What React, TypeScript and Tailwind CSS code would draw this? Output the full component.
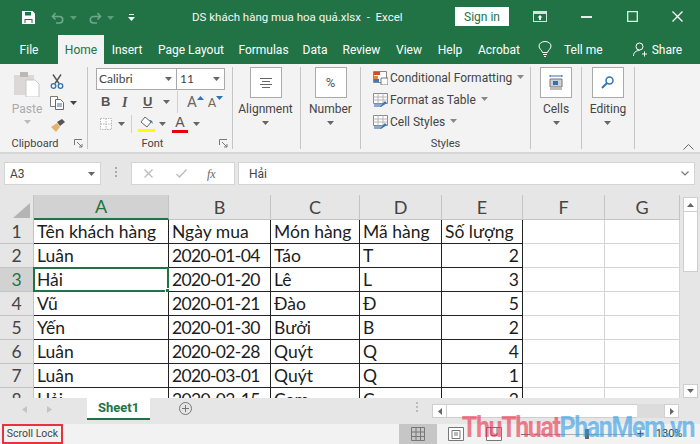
import type { ReactNode } from "react";

const ui = "font-['Roboto','Open_Sans',sans-serif]";
const sheetFont = "font-['Lato','Noto_Sans',sans-serif]";

const tabs = [
  { label: "File", cls: "w-[58px]" },
  { label: "Home", cls: "w-[46px] bg-[#f3f3f3] text-[#217346]" },
  { label: "Insert", cls: "w-[46px]" },
  { label: "Page Layout", cls: "w-[82px]" },
  { label: "Formulas", cls: "w-[63px]" },
  { label: "Data", cls: "w-[40px]" },
  { label: "Review", cls: "w-[53px]" },
  { label: "View", cls: "w-[42px]" },
  { label: "Help", cls: "w-[40px]" },
  { label: "Acrobat", cls: "w-[58px]" },
];

const columns = [
  { name: "A", cls: "w-[135px]" },
  { name: "B", cls: "w-[102px]" },
  { name: "C", cls: "w-[89px]" },
  { name: "D", cls: "w-[82px]" },
  { name: "E", cls: "w-[81px]" },
  { name: "F", cls: "w-[82px]" },
  { name: "G", cls: "w-[75px]" },
];

const rows: string[][] = [
  ["Tên khách hàng", "Ngày mua", "Món hàng", "Mã hàng", "Số lượng"],
  ["Luân", "2020-01-04", "Táo", "T", "2"],
  ["Hải", "2020-01-20", "Lê", "L", "3"],
  ["Vũ", "2020-01-21", "Đào", "Đ", "5"],
  ["Yến", "2020-01-30", "Bưởi", "B", "2"],
  ["Luân", "2020-02-28", "Quýt", "Q", "4"],
  ["Luân", "2020-03-01", "Quýt", "Q", "1"],
  ["Hải", "2020-03-15", "Cam", "C", "3"],
];

function Drop({ color = "#666" }: { color?: string }) {
  return (
    <svg width="7" height="4" viewBox="0 0 7 4" className="shrink-0">
      <path d="M0 0h7L3.5 4z" fill={color} />
    </svg>
  );
}

function Launcher() {
  return (
    <svg width="9" height="9" viewBox="0 0 9 9" fill="none" stroke="#777">
      <path d="M.5 6V.5H8M3 3l5 5M8 5v3H5" />
    </svg>
  );
}

function Group({
  label,
  cls,
  labelCls = "",
  children,
  launcher,
}: {
  label: string;
  cls: string;
  labelCls?: string;
  children: ReactNode;
  launcher?: ReactNode;
}) {
  return (
    <div className={`flex h-[82px] shrink-0 flex-col border-r border-[#c6c6c6] ${cls}`}>
      <div className="min-h-0 flex-1">{children}</div>
      <div className={`relative h-[10px] text-center text-[11px] leading-[10px] text-[#444] ${labelCls}`}>
        {label}
        {launcher}
      </div>
    </div>
  );
}

function BigButton({ label, icon }: { label: string; icon: ReactNode }) {
  return (
    <div className="flex flex-col items-center">
      <div className="flex h-[31px] w-[32px] items-center justify-center border border-[#ababab] bg-white">{icon}</div>
      <div className="mt-[3px] text-[12px] leading-[16px] text-[#444]">{label}</div>
      <div className="mt-[4px]">
        <Drop />
      </div>
    </div>
  );
}

function StyleRow({ label, icon }: { label: string; icon: ReactNode }) {
  return (
    <div className="flex h-[22px] items-center">
      <div className="flex w-[18px] justify-center">{icon}</div>
      <span className="ml-[1px] text-[12px] text-[#444]">{label}</span>
      <span className="mb-[2px] ml-[5px]">
        <Drop color="#888" />
      </span>
    </div>
  );
}

function TableIcon() {
  return (
    <svg width="15" height="15" viewBox="0 0 15 15">
      <path d="M.5.5h14v10h-14z" fill="#fff" stroke="#8a8a8a" />
      <path d="M.5 4h14M.5 7h14M5 .5v10M10 .5v10" stroke="#b5b5b5" />
      <path d="M6 14l6-6 2 2-6 4z" fill="#3f77b5" />
      <path d="M1 14h6l2-3H1z" fill="#8aa9cc" />
    </svg>
  );
}

function TitleBar() {
  return (
    <div className="flex h-[35px] shrink-0 items-center text-white">
      <div className="ml-[22px] flex items-center">
        <svg width="13" height="13" viewBox="0 0 13 13">
          <path d="M0 0h10.5L13 2.5V13H0z" fill="#fff" />
          <path d="M3 1h6v3.5H3zM2.5 8h8v4h-8z" fill="#217346" />
          <path d="M3.5 9h6v3h-6z" fill="#fff" />
        </svg>
        <svg width="14" height="12" viewBox="0 0 14 12" fill="none" stroke="#70a98a" strokeWidth="1.6" className="ml-[16px]">
          <path d="M4.5 1L1.5 4.5l3 3M1.5 4.5h7a3.2 3.2 0 0 1 0 6.5H5" />
        </svg>
        <span className="ml-[5px]">
          <Drop color="#5d9c7c" />
        </span>
        <svg width="14" height="12" viewBox="0 0 14 12" fill="none" stroke="#70a98a" strokeWidth="1.6" className="ml-[11px]">
          <path d="M9.5 1l3 3.5-3 3M12.5 4.5h-7a3.2 3.2 0 0 0 0 6.5H9" />
        </svg>
        <span className="ml-[5px]">
          <Drop color="#5d9c7c" />
        </span>
        <svg width="7" height="8" viewBox="0 0 7 8" className="ml-[14px]">
          <path d="M1 0h5v1H1zM0 3h7L3.5 7z" fill="#fff" />
        </svg>
      </div>
      <div className="ml-[57px] text-[11.5px] text-[#f4f8f5]">DS khách hàng mua hoa quả.xlsx&nbsp; -&nbsp; Excel</div>
      <div className="ml-auto flex items-center pb-[2px]">
        <div className="flex h-[19px] w-[54px] items-center justify-center bg-white text-[12px] text-[#217346]">Sign in</div>
        <svg width="14" height="11" viewBox="0 0 14 11" className="ml-[24px]">
          <path d="M0 0h14v11H0z" fill="#d4e4da" />
          <path d="M1 3h12v7H1z" fill="#217346" />
          <path d="M7 4l2.5 2.5H8V9H6V6.5H4.5z" fill="#fff" />
        </svg>
        <svg width="11" height="2" viewBox="0 0 11 2" className="ml-[34px]">
          <path d="M0 0h11v2H0z" fill="#e4efe8" />
        </svg>
        <svg width="11" height="11" viewBox="0 0 11 11" fill="none" stroke="#e4efe8" strokeWidth="1.3" className="ml-[35px]">
          <path d="M.7.7h9.6v9.6H.7z" />
        </svg>
        <svg width="11" height="11" viewBox="0 0 11 11" fill="none" stroke="#fff" strokeWidth="1.3" className="ml-[34px] mr-[17px]">
          <path d="M.5.5l10 10M10.5.5l-10 10" />
        </svg>
      </div>
    </div>
  );
}

function TabStrip() {
  return (
    <div className="flex h-[29px] shrink-0 items-stretch text-[12px] text-white">
      {tabs.map((t) => (
        <div key={t.label} className={`flex items-center justify-center ${t.cls}`}>
          {t.label}
        </div>
      ))}
      <svg width="14" height="17" viewBox="0 0 14 17" fill="none" stroke="#fff" className="ml-[10px] mt-[6px]">
        <path d="M4.5 11.5C4 9 1 8 1 5a6 4.5 0 0 1 12 0c0 3-3 4-3.5 6.5zM5 13.5h4M6 15.5h2" />
      </svg>
      <div className="ml-[12px] flex items-center">Tell me</div>
      <svg width="15" height="15" viewBox="0 0 15 15" fill="none" stroke="#fff" className="ml-[30px] mt-[7px]">
        <circle cx="6.5" cy="4.5" r="3.5" />
        <path d="M.5 14c0-3.5 2.5-5.5 6-5.5M11.5 9.5v5M9 12h5" />
      </svg>
      <div className="ml-[4px] flex items-center">Share</div>
    </div>
  );
}

function Ribbon() {
  return (
    <div className="flex h-[90px] shrink-0 border-b-2 border-[#d6d6d6] bg-[#f3f3f3] pt-[3px]">
      <Group
        label="Clipboard"
        cls="w-[88px]"
        labelCls="pr-[17px]"
        launcher={
          <span className="absolute right-[4px] top-0">
            <Launcher />
          </span>
        }
      >
        <div className="flex">
          <div className="ml-[13px] flex w-[28px] flex-col items-center pt-[5px]">
            <svg width="26" height="25" viewBox="0 0 26 25">
              <path d="M0 3h20v20H0z" fill="#dcd8d8" />
              <path d="M6 0h8v5H6z" fill="#bdb8b8" />
              <path d="M12 8h9l4 4v13H12z" fill="#fff" stroke="#c8c8c8" />
            </svg>
            <div className="mt-[4px] text-[12px] leading-[16px] text-[#aaa]">Paste</div>
            <div className="mt-[3px]">
              <Drop color="#bbb" />
            </div>
          </div>
          <div className="ml-[9px] flex flex-col pt-[3px]">
            <div className="flex h-[22px] items-center">
              <svg width="14" height="15" viewBox="0 0 14 15" fill="none" stroke="#555">
                <path d="M3 .5l6 9M11 .5l-6 9" strokeWidth="1.4" />
                <circle cx="3.5" cy="12" r="2.3" stroke="#2f75b5" strokeWidth="1.3" />
                <circle cx="10.5" cy="12" r="2.3" stroke="#2f75b5" strokeWidth="1.3" />
              </svg>
            </div>
            <div className="flex h-[22px] items-center">
              <svg width="14" height="14" viewBox="0 0 14 14" fill="#fff" stroke="#777">
                <path d="M.5.5h7v10h-7z" />
                <path d="M5.5 3.5h5l3 3v7h-8z" stroke="#2f75b5" />
                <path d="M7 8h5M7 10h5" stroke="#2f75b5" />
              </svg>
              <span className="ml-[6px]">
                <Drop color="#444" />
              </span>
            </div>
            <div className="flex h-[22px] items-center">
              <svg width="15" height="13" viewBox="0 0 15 13">
                <path d="M1 8l6-4 3 4-4 5z" fill="#e3b36b" />
                <path d="M7 3l5-3 3 3-5 4z" fill="#555" />
              </svg>
            </div>
          </div>
        </div>
      </Group>
      <Group
        label="Font"
        cls="w-[145px]"
        labelCls="pr-[15px]"
        launcher={
          <span className="absolute right-[4px] top-0">
            <Launcher />
          </span>
        }
      >
        <div className="ml-[8px] mt-[1px] flex h-[22px] w-[129px] border border-[#a9a9a9] bg-white text-[12px] text-[#444]">
          <div className={`flex w-[80px] items-center justify-between border-r border-[#a9a9a9] pl-[2px] pr-[4px] ${sheetFont}`}>
            Calibri
            <Drop />
          </div>
          <div className={`flex flex-1 items-center justify-between pl-[3px] pr-[4px] ${sheetFont}`}>
            11
            <Drop />
          </div>
        </div>
        <div className="mt-[1px] flex h-[22px] items-center text-[#555]">
          <span className="ml-[13px] w-[21px] font-['Liberation_Sans'] text-[13px] font-bold">B</span>
          <span className="w-[21px] font-['Liberation_Serif'] text-[14px] font-bold italic">I</span>
          <span className="w-[20px] font-['Liberation_Sans'] text-[13px] font-bold underline">U</span>
          <Drop />
          <span className="ml-[7px] h-[22px] w-px bg-[#d0d0d0]" />
          <span className="ml-[9px] flex items-start text-[15px] leading-none text-[#666]">
            A
            <svg width="7" height="4" viewBox="0 0 7 4" className="mt-[1px]">
              <path d="M0 4h7L3.5 0z" fill="#2f75b5" />
            </svg>
          </span>
          <span className="ml-[4px] flex items-start text-[13px] leading-none text-[#666]">
            A
            <svg width="7" height="4" viewBox="0 0 7 4">
              <path d="M0 0h7L3.5 4z" fill="#2f75b5" />
            </svg>
          </span>
        </div>
        <div className="flex h-[22px] items-center">
          <svg width="12" height="12" viewBox="0 0 12 12" fill="#fff" stroke="#b8b8b8" className="ml-[12px]">
            <path d="M.5.5h11v11H.5zM6 .5v11M.5 6h11" strokeDasharray="1.5 1" />
          </svg>
          <span className="ml-[6px]">
            <Drop />
          </span>
          <span className="ml-[6px] h-[18px] w-px bg-[#d0d0d0]" />
          <div className="ml-[6px] flex w-[17px] flex-col items-center">
            <svg width="13" height="11" viewBox="0 0 13 11">
              <path d="M5 0l6 5-4 5-6-5z" fill="#fff" stroke="#666" />
              <path d="M9 3c3 0 4 2 3.5 4L11 5z" fill="#2f75b5" />
            </svg>
            <div className="mt-[1px] h-[3px] w-[17px] bg-[#ffff00]" />
          </div>
          <span className="ml-[4px]">
            <Drop />
          </span>
          <div className="ml-[6px] flex w-[16px] flex-col items-center">
            <span className="h-[12px] font-['Liberation_Sans'] text-[14px] leading-[12px] text-[#555]">A</span>
            <div className="mt-[2px] h-[3px] w-[16px] bg-[#e8000d]" />
          </div>
          <span className="ml-[5px]">
            <Drop />
          </span>
        </div>
      </Group>
      <Group label="" cls="w-[68px]">
        <div className="flex justify-center pr-[2px]">
          <BigButton
            label="Alignment"
            icon={
              <svg width="14" height="10" viewBox="0 0 14 10" stroke="#666">
                <path d="M1 .5h12M3 3.5h8M1 6.5h12M3 9.5h8" />
              </svg>
            }
          />
        </div>
      </Group>
      <Group label="" cls="w-[60px]">
        <div className="flex justify-center">
          <BigButton label="Number" icon={<span className="text-[13px] text-[#555]">%</span>} />
        </div>
      </Group>
      <Group label="Styles" cls="w-[170px]">
        <div className="ml-[10px]">
          <StyleRow
            label="Conditional Formatting"
            icon={
              <svg width="15" height="14" viewBox="0 0 15 14">
                <path d="M.5.5h13v11H.5z" fill="#fff" stroke="#888" />
                <path d="M1 1h6v3H1z" fill="#d9472b" />
                <path d="M1 5h4v3H1z" fill="#e8863a" />
                <path d="M1 8h5v3H1z" fill="#3f77b5" />
                <path d="M8 7h7v7H8z" fill="#fff" stroke="#777" />
              </svg>
            }
          />
          <StyleRow label="Format as Table" icon={<TableIcon />} />
          <StyleRow label="Cell Styles" icon={<TableIcon />} />
        </div>
      </Group>
      <Group label="" cls="w-[51px]">
        <div className="flex justify-center">
          <BigButton
            label="Cells"
            icon={
              <svg width="14" height="15" viewBox="0 0 14 15">
                <path d="M1 1h12M1 0v2M13 0v2" stroke="#2f75b5" fill="none" />
                <path d="M1 4h12v8H1z" fill="#cfcfcf" stroke="#777" />
                <path d="M4 6h5v4H4z" fill="#2f75b5" />
                <path d="M1 13h12v2H1z" fill="#bbb" />
              </svg>
            }
          />
        </div>
      </Group>
      <Group label="" cls="w-[53px]">
        <div className="flex justify-center">
          <BigButton
            label="Editing"
            icon={
              <svg width="13" height="13" viewBox="0 0 13 13" fill="none" stroke="#2f75b5" strokeWidth="1.5">
                <circle cx="8.5" cy="4.5" r="3.5" />
                <path d="M6 7l-5 5" strokeWidth="2" />
              </svg>
            }
          />
        </div>
      </Group>
      <div className="flex flex-1 items-end justify-end pb-[2px] pr-[6px]">
        <svg width="11" height="6" viewBox="0 0 11 6" fill="none" stroke="#666">
          <path d="M.5 5.5l5-5 5 5" />
        </svg>
      </div>
    </div>
  );
}

function FormulaBar() {
  return (
    <div className="flex h-[41px] shrink-0 items-start bg-[#e6e6e6] pl-[4px] pr-[5px] pt-[8px] text-[12px] text-[#444]">
      <div className="flex h-[23px] w-[97px] items-center justify-between border border-[#d4d4d4] bg-white pl-[5px] pr-[5px]">
        A3
        <Drop />
      </div>
      <div className="flex w-[30px] flex-col items-center gap-[2px] pt-[5px]">
        <i className="h-[2px] w-[2px] bg-[#aaa]" />
        <i className="h-[2px] w-[2px] bg-[#aaa]" />
        <i className="h-[2px] w-[2px] bg-[#aaa]" />
      </div>
      <div className="flex h-[23px] w-[104px] items-center border border-[#d4d4d4] bg-white">
        <svg width="9" height="9" viewBox="0 0 9 9" stroke="#bbb" strokeWidth="1.3" className="ml-[12px]">
          <path d="M.5.5l8 8M8.5.5l-8 8" />
        </svg>
        <svg width="11" height="9" viewBox="0 0 11 9" fill="none" stroke="#bbb" strokeWidth="1.3" className="ml-[23px]">
          <path d="M.5 5l3 3 7-7.5" />
        </svg>
        <span className="ml-[20px] font-['Liberation_Serif'] text-[12px] italic text-[#666]">fx</span>
      </div>
      <div className="ml-[3px] flex h-[23px] flex-1 items-center justify-between border border-[#d4d4d4] bg-white pl-[10px] pr-[5px]">
        Hải
        <svg width="8" height="5" viewBox="0 0 8 5" fill="none" stroke="#777" strokeWidth="1.2">
          <path d="M.5.5L4 4 7.5.5" />
        </svg>
      </div>
    </div>
  );
}

function Sheet() {
  return (
    <div className={`flex min-h-0 flex-1 bg-[#e6e6e6] ${sheetFont}`}>
      <div className="w-[680px] shrink-0 overflow-hidden">
        <div className="flex h-[25px] text-[18px] text-[#444]">
          <div className="flex w-[34px] shrink-0 items-end justify-end border-r border-[#c4c4c4] pb-[2px] pr-[3px]">
            <svg width="17" height="15" viewBox="0 0 17 15">
              <path d="M17 0v15H0z" fill="#b4b4b4" />
            </svg>
          </div>
          {columns.map((c) => (
            <div
              key={c.name}
              className={`flex shrink-0 items-center justify-center border-r border-[#c4c4c4] ${c.cls} ${
                c.name === "A" ? "border-b-2 border-b-[#217346] bg-[#d2d2d2] text-[#217346]" : "border-b border-b-[#c4c4c4]"
              }`}
            >
              {c.name}
            </div>
          ))}
        </div>
        {rows.map((row, r) => (
          <div key={r} className="flex h-[24px] text-[17.5px] leading-[24px] text-[#1c1c1c]">
            <div
              className={`flex w-[34px] shrink-0 items-center justify-center border-b border-r border-[#c4c4c4] text-[#444] ${
                r === 2 ? "bg-[#d2d2d2] text-[#217346]" : ""
              }`}
            >
              {r + 1}
            </div>
            {columns.map((c, i) => {
              const filled = i < 5;
              const value = row[i] ?? "";
              const selected = r === 2 && i === 0;
              return (
                <div
                  key={c.name}
                  className={`relative box-border shrink-0 whitespace-nowrap px-[3px] ${c.cls} ${
                    filled ? "border-b border-r border-[#222] bg-white" : "border-b border-r border-[#d4d4d4] bg-white"
                  } ${i === 4 && r > 0 ? "text-right" : ""} ${i === 1 && r > 0 ? "tracking-[-0.65px]" : ""}`}
                >
                  {value}
                  {selected && (
                    <div className="absolute left-[-1px] top-[-1px] h-[25px] w-[136px] border-2 border-[#217346]">
                      <span className="absolute bottom-[-4px] right-[-4px] h-[6px] w-[6px] border border-white bg-[#217346]" />
                    </div>
                  )}
                </div>
              );
            })}
          </div>
        ))}
      </div>
      <div className="ml-[3px] flex w-[15px] flex-col pt-[2px]">
        <div className="flex h-[15px] items-center justify-center border border-[#cfcfcf] bg-white">
          <svg width="7" height="4" viewBox="0 0 7 4">
            <path d="M0 4h7L3.5 0z" fill="#666" />
          </svg>
        </div>
        <div className="h-[60px] border border-t-0 border-[#cfcfcf] bg-white" />
        <div className="flex-1" />
        <div className="flex h-[14px] items-center justify-center border border-[#cfcfcf] bg-white">
          <Drop />
        </div>
      </div>
    </div>
  );
}

function SheetTabs() {
  return (
    <div className={`flex h-[26px] shrink-0 bg-[#e6e6e6] ${ui}`}>
      <div className="flex w-[87px] items-center pb-[4px] pl-[22px]">
        <svg width="5" height="7" viewBox="0 0 5 7">
          <path d="M5 0v7L0 3.5z" fill="#c4c4c4" />
        </svg>
        <svg width="5" height="7" viewBox="0 0 5 7" className="ml-[20px]">
          <path d="M0 0v7l5-3.5z" fill="#c4c4c4" />
        </svg>
      </div>
      <div className="flex h-[22px] w-[63px] items-center justify-center border-b-2 border-[#217346] bg-white text-[13px] font-bold text-[#217346]">
        Sheet1
      </div>
      <div className="ml-[29px] mt-[4px] flex h-[13px] w-[13px] items-center justify-center rounded-full border border-[#777]">
        <svg width="7" height="7" viewBox="0 0 7 7" stroke="#777">
          <path d="M3.5 0v7M0 3.5h7" />
        </svg>
      </div>
      <div className="ml-[224px] mt-[4px] flex flex-col gap-[2px]">
        <i className="h-[2px] w-[2px] bg-[#bbb]" />
        <i className="h-[2px] w-[2px] bg-[#bbb]" />
        <i className="h-[2px] w-[2px] bg-[#bbb]" />
      </div>
      <div className="ml-[14px] mt-[6px] flex h-[14px] w-[247px]">
        <div className="flex w-[15px] items-center justify-center border border-[#cfcfcf] bg-white">
          <svg width="4" height="7" viewBox="0 0 4 7">
            <path d="M4 0v7L0 3.5z" fill="#666" />
          </svg>
        </div>
        <div className="w-[190px] border-y border-[#cfcfcf] bg-white" />
        <div className="flex-1 bg-[#dcdcdc]" />
        <div className="flex w-[15px] items-center justify-center border border-[#cfcfcf] bg-white">
          <svg width="4" height="7" viewBox="0 0 4 7">
            <path d="M0 0v7l4-3.5z" fill="#666" />
          </svg>
        </div>
      </div>
    </div>
  );
}

function StatusBar() {
  return (
    <div className="flex h-[20px] shrink-0 items-stretch bg-[#f2f2f2] text-[11px] text-[#444]">
      <div className="ml-[2px] flex w-[61px] items-center justify-center border-2 border-[#e8333f] text-[10.5px]">Scroll Lock</div>
      <div className="ml-[336px] flex w-[38px] items-center justify-center bg-[#c6c6c6]">
        <svg width="14" height="14" viewBox="0 0 14 14" fill="none" stroke="#777">
          <path d="M.5.5h13v13H.5zM5 .5v13M9.5.5v13M.5 5h13M.5 9.5h13" />
        </svg>
      </div>
      <div className="ml-[11px] flex items-center">
        <svg width="16" height="14" viewBox="0 0 16 14" fill="#fff" stroke="#777">
          <path d="M.5.5h15v13H.5zM4 3.5h8v8H4zM6 6h4M6 8h4" />
        </svg>
        <svg width="16" height="14" viewBox="0 0 16 14" fill="#fff" stroke="#777" className="ml-[22px]">
          <path d="M.5.5h15v13H.5zM5 .5v8h6v-8" />
        </svg>
        <span className="ml-[19px] h-[1px] w-[9px] bg-[#777]" />
        <div className="relative ml-[4px] h-[1px] w-[102px] bg-[#b0b0b0]">
          <span className="absolute left-[51px] top-[-5px] h-[10px] w-[4px] bg-[#666]" />
        </div>
        <span className="ml-[1px] text-[12px] leading-none">+</span>
        <span className="ml-[12px]">130%</span>
      </div>
    </div>
  );
}

export default function App() {
  return (
    <div className={`relative flex h-[444px] w-[700px] flex-col overflow-hidden bg-[#217346] ${ui}`}>
      <TitleBar />
      <TabStrip />
      <Ribbon />
      <FormulaBar />
      <Sheet />
      <SheetTabs />
      <StatusBar />
      <div className="pointer-events-none absolute bottom-0 right-[6px] scale-y-115 font-['Roboto',sans-serif] text-[25px] font-bold leading-[32px] tracking-[-1.4px] opacity-60">
        <span className="text-[#e8304a]">ThuThuat</span>
        <span className="text-[#2e9be6]">PhanMem</span>
        <span className="text-[#2e9be6]">.vn</span>
      </div>
    </div>
  );
}
